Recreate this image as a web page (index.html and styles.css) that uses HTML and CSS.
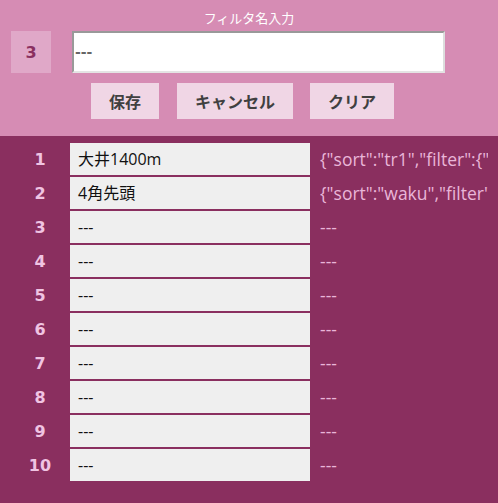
FILE: index.html
```html
<!DOCTYPE html>
<html lang="ja">
<head>
<meta charset="utf-8">
<title>フィルタ</title>
<link rel="stylesheet" href="styles.css">
</head>
<body>
<div class="head">
  <div class="title">フィルタ名入力</div>
  <div class="edit-row">
    <div class="cur-num">3</div>
    <input class="name-input" type="text" value="---">
  </div>
  <div class="buttons">
    <button class="btn btn-save">保存</button>
    <button class="btn btn-cancel">キャンセル</button>
    <button class="btn btn-clear">クリア</button>
  </div>
</div>
<div class="list">
  <div class="row"><div class="num">1</div><div class="name">大井1400m</div><div class="json">{"sort":"tr1","filter":{"course":"oi","dist":1400}}</div></div>
  <div class="row"><div class="num">2</div><div class="name">4角先頭</div><div class="json">{"sort":"waku","filter":{"corner4":1}}</div></div>
  <div class="row"><div class="num">3</div><div class="name">---</div><div class="json">---</div></div>
  <div class="row"><div class="num">4</div><div class="name">---</div><div class="json">---</div></div>
  <div class="row"><div class="num">5</div><div class="name">---</div><div class="json">---</div></div>
  <div class="row"><div class="num">6</div><div class="name">---</div><div class="json">---</div></div>
  <div class="row"><div class="num">7</div><div class="name">---</div><div class="json">---</div></div>
  <div class="row"><div class="num">8</div><div class="name">---</div><div class="json">---</div></div>
  <div class="row"><div class="num">9</div><div class="name">---</div><div class="json">---</div></div>
  <div class="row"><div class="num">10</div><div class="name">---</div><div class="json">---</div></div>
</div>
</body>
</html>
```
FILE: styles.css
```css
html, body {
  margin: 0;
  padding: 0;
}
body {
  background: #8a2f5f;
  font-family: "Open Sans", "Noto Sans CJK JP", sans-serif;
  width: 498px;
  height: 503px;
  overflow: hidden;
}
.head {
  background: #d68cb4;
  padding: 8px 0 17px;
}
.title {
  text-align: center;
  color: #ffffff;
  font-family: "Noto Sans CJK JP", sans-serif;
  font-size: 13px;
  line-height: 20px;
  height: 20px;
}
.edit-row {
  display: flex;
  margin-top: 3px;
  padding-left: 11px;
  gap: 21px;
}
.cur-num {
  width: 40px;
  height: 42px;
  background: #e0a8c8;
  color: #8a2f5f;
  font-family: "DejaVu Sans", sans-serif;
  font-weight: bold;
  font-size: 16px;
  display: flex;
  align-items: center;
  justify-content: center;
}
.name-input {
  box-sizing: border-box;
  width: 373px;
  height: 42px;
  margin: 0;
  border: 2px solid;
  border-color: #999999 #dddddd #e4e4e4 #999999;
  background: #ffffff;
  padding: 0 1px;
  font-family: "DejaVu Sans", sans-serif;
  font-weight: 700;
  font-size: 14px;
  color: #666666;
  outline: none;
}
.buttons {
  display: flex;
  margin-top: 10px;
  padding-left: 91px;
}
.btn {
  height: 36px;
  border: none;
  background: #f0d6e5;
  color: #404040;
  font-family: "Noto Sans CJK JP", sans-serif;
  font-weight: bold;
  font-size: 16px;
  padding: 0;
  margin: 0;
}
.btn-save { width: 68px; }
.btn-cancel { width: 116px; margin-left: 18px; }
.btn-clear { width: 84px; margin-left: 17px; }
.list {
  padding-top: 7px;
}
.row {
  display: flex;
  align-items: center;
  height: 32px;
  margin-bottom: 2px;
}
.num {
  width: 60px;
  margin-left: 10px;
  text-align: center;
  color: #f0c4e2;
  font-family: "DejaVu Sans", sans-serif;
  font-weight: bold;
  font-size: 16px;
}
.name {
  box-sizing: border-box;
  width: 240px;
  height: 32px;
  line-height: 32px;
  background: #efefef;
  color: #111111;
  padding-left: 8px;
  font-size: 16px;
}
.json {
  width: 168px;
  margin-left: 10px;
  white-space: nowrap;
  overflow: hidden;
  color: #e9b6d8;
  font-size: 17.5px;
}
```
